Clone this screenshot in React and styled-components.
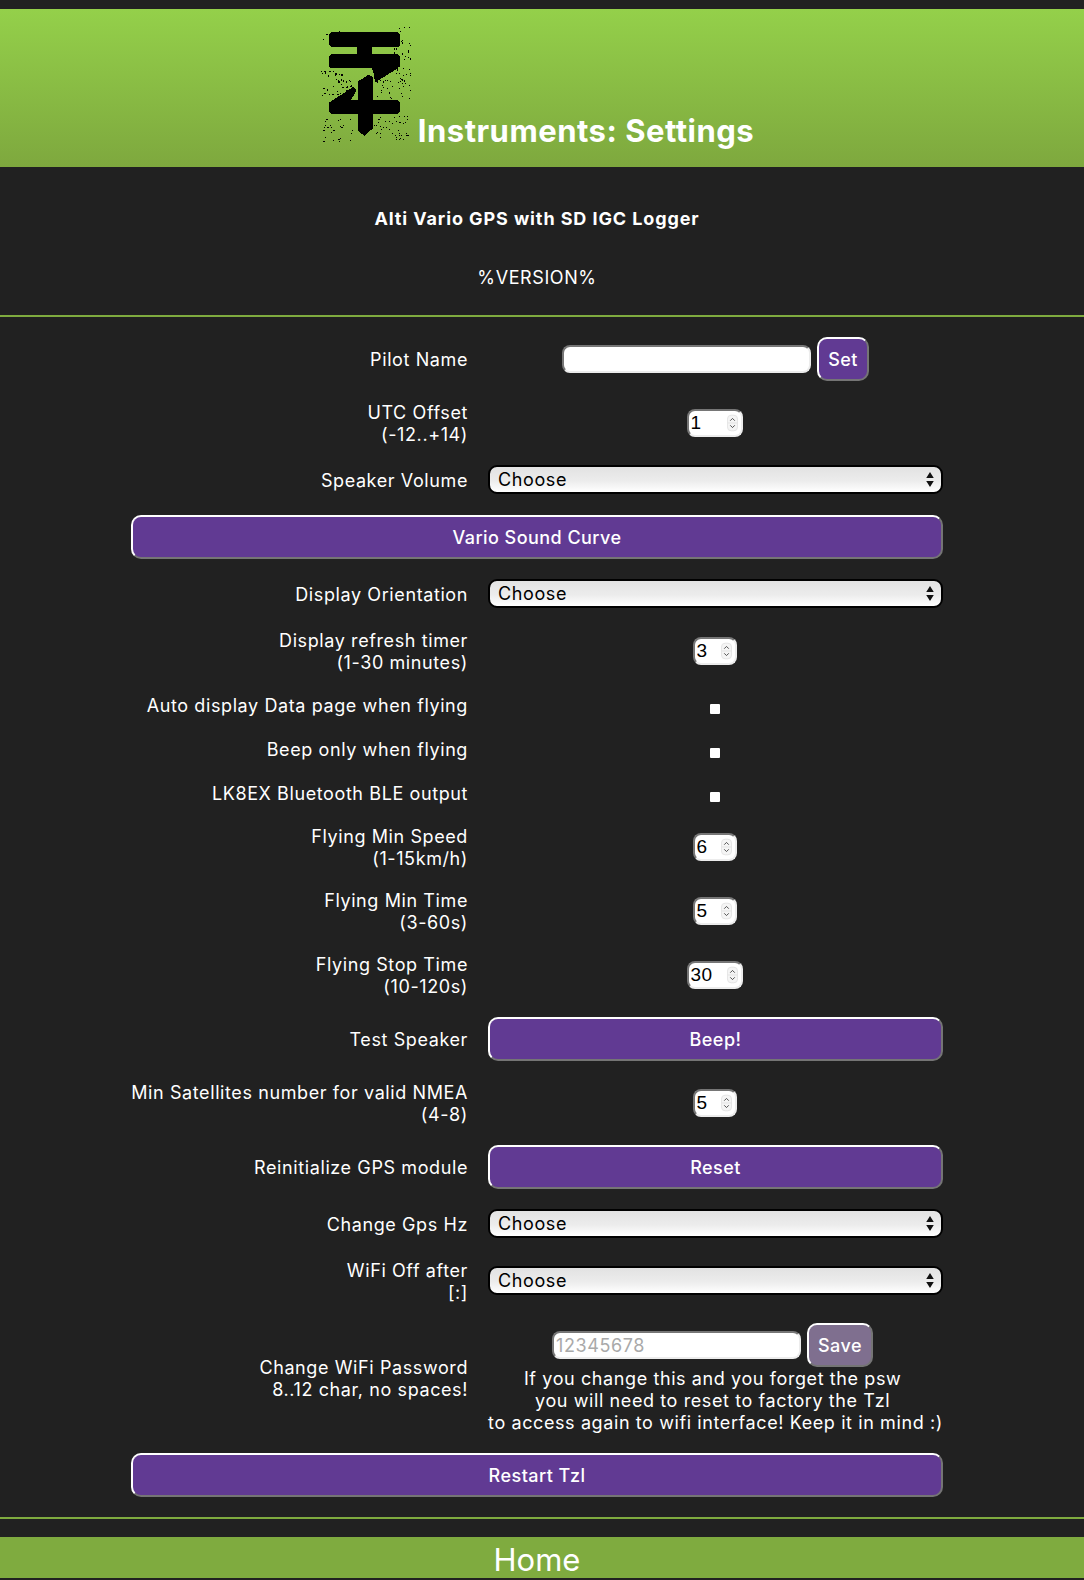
import React from "react"
import styled, { createGlobalStyle } from "styled-components"

const GlobalStyle = createGlobalStyle`
  html, body {
    margin: 0;
    padding: 0;
    background: #212121;
  }
  body {
    font-family: Inter, "Noto Sans", "Liberation Sans", sans-serif;
    letter-spacing: 0.6px;
    color: #fff;
  }
`

// logo speckle, seeded so it comes out the same on every load
const speckle = (seed, count, x0, y0, x1, y1) => {
  let s = seed
  const next = () => {
    s = (s * 16807) % 2147483647
    return s / 2147483647
  }
  return Array.from({ length: count }, () => ({
    x: Math.round(x0 + next() * (x1 - x0)),
    y: Math.round(y0 + next() * (y1 - y0)),
  }))
}

const dots = [
  ...speckle(11, 34, 250, 22, 300, 200),
  ...speckle(23, 42, 32, 155, 128, 240),
  ...speckle(37, 30, 200, 175, 300, 240),
  ...speckle(41, 44, 190, 290, 295, 362),
  ...speckle(53, 26, 40, 296, 135, 368),
  ...speckle(67, 8, 38, 25, 110, 70),
]

const Logo = () => (
  <LogoSvg viewBox="30 20 275 350" aria-label="logo">
    <path d="M62 42H264L270 48V80L264 85H185V108H262L268 114V144L255 154L195 192L190 165L185 150H62L57 144V114L62 108H140V85H62L57 80V48Z" />
    <path d="M145 188L176 168L187 175V245H262L268 251V279L262 285H187V330L162 352L143 335V285H62L57 279V252L130 205L140 214L122 245H143Z" />
    {dots.map((d, i) => (
      <rect key={i} x={d.x} y={d.y} width="3.4" height="3.4" />
    ))}
  </LogoSvg>
)

const Stepper = () => (
  <StepperSvg viewBox="0 0 12 18">
    <rect x="0.5" y="0.5" width="11" height="17" rx="4" fill="#f5f5f5" stroke="#e2e2e2" />
    <line x1="1" y1="9" x2="11" y2="9" stroke="#e2e2e2" />
    <path d="M3.5 6.5L6 4L8.5 6.5M3.5 11.5L6 14L8.5 11.5" fill="none" stroke="#444" strokeWidth="1" />
  </StepperSvg>
)

const NumberField = ({ value, wide }) => (
  <NumberBox $wide={wide}>
    <NumberInput defaultValue={value} />
    <Stepper />
  </NumberBox>
)

const SelectField = () => (
  <SelectWrap>
    <Select>
      <option>Choose</option>
    </Select>
    <SelectArrows viewBox="0 0 10 18">
      <path d="M5 1L9 7.5H1ZM5 17L1 10.5H9Z" />
    </SelectArrows>
  </SelectWrap>
)

const App = () => {
  return (
    <>
      <GlobalStyle />
      <Page>
        <Header>
          <Logo />
          <Title>Instruments: Settings</Title>
        </Header>
        <Subtitle>Alti Vario GPS with SD IGC Logger</Subtitle>
        <Version>%VERSION%</Version>
        <Rule />
        <Form>
          <Label>Pilot Name</Label>
          <Field>
            <TextInput />
            <SmallButton>Set</SmallButton>
          </Field>

          <Label>UTC Offset<br />(-12..+14)</Label>
          <Field><NumberField value="1" wide /></Field>

          <Label>Speaker Volume</Label>
          <SelectField />

          <WideButton $span>Vario Sound Curve</WideButton>

          <Label>Display Orientation</Label>
          <SelectField />

          <Label>Display refresh timer<br />(1-30 minutes)</Label>
          <Field><NumberField value="3" /></Field>

          <Label>Auto display Data page when flying</Label>
          <Field><CheckMark /></Field>

          <Label>Beep only when flying</Label>
          <Field><CheckMark /></Field>

          <Label>LK8EX Bluetooth BLE output</Label>
          <Field><CheckMark /></Field>

          <Label>Flying Min Speed<br />(1-15km/h)</Label>
          <Field><NumberField value="6" /></Field>

          <Label>Flying Min Time<br />(3-60s)</Label>
          <Field><NumberField value="5" /></Field>

          <Label>Flying Stop Time<br />(10-120s)</Label>
          <Field><NumberField value="30" wide /></Field>

          <Label>Test Speaker</Label>
          <WideButton>Beep!</WideButton>

          <Label>Min Satellites number for valid NMEA<br />(4-8)</Label>
          <Field><NumberField value="5" /></Field>

          <Label>Reinitialize GPS module</Label>
          <WideButton>Reset</WideButton>

          <Label>Change Gps Hz</Label>
          <SelectField />

          <Label>WiFi Off after<br />[:]</Label>
          <SelectField />

          <Label>Change WiFi Password<br />8..12 char, no spaces!</Label>
          <PasswordCell>
            <PasswordRow>
              <TextInput placeholder="12345678" />
              <SmallButton $muted>Save</SmallButton>
            </PasswordRow>
            <Note>
              If you change this and you forget the psw&nbsp;<br />
              you will need to reset to factory the Tzl&nbsp;<br />
              to access again to wifi interface! Keep it in mind :)
            </Note>
          </PasswordCell>

          <WideButton $span>Restart Tzl</WideButton>
        </Form>
        <Rule $bottom />
        <HomeBar>Home</HomeBar>
      </Page>
    </>
  )
}

const Page = styled.div`
  padding: 9px 0 1px;
  width: 1084px;
  box-sizing: border-box;
`

const Header = styled.header`
  height: 158px;
  box-sizing: border-box;
  background: linear-gradient(#94d04a, #7ea83e);
  display: flex;
  justify-content: center;
  align-items: flex-end;
  gap: 6px;
  padding: 0 10px 17px 0;
`

const LogoSvg = styled.svg`
  width: 92px;
  height: 117px;
  margin-bottom: 8px;
  fill: #000;
  shape-rendering: crispEdges;
`

const Title = styled.h1`
  margin: 0;
  font-size: 31px;
  line-height: 38px;
  font-weight: 700;
  letter-spacing: 0.5px;
  color: #fff;
`

const Subtitle = styled.h3`
  margin: 41px 0 0;
  padding-right: 10px;
  text-align: center;
  font-size: 18px;
  line-height: 22px;
  font-weight: 700;
  letter-spacing: 0.9px;
`

const Version = styled.p`
  margin: 37px 0 0;
  padding-right: 10px;
  text-align: center;
  font-size: 18px;
  line-height: 22px;
`

const Rule = styled.hr`
  margin: ${p => (p.$bottom ? "20px 0 18px" : "26px 0 20px")};
  border: 0;
  height: 2px;
  background: #7fab3f;
`

const Form = styled.div`
  width: 812px;
  margin-left: 131px;
  display: grid;
  grid-template-columns: 337px 455px;
  column-gap: 20px;
  row-gap: 20px;
  align-items: center;
`

const Label = styled.div`
  text-align: right;
  font-size: 18px;
  line-height: 22px;
  min-height: 22px;
  white-space: nowrap;
  padding-top: 1px;
  margin-bottom: -1px;
`

const Field = styled.div`
  display: flex;
  justify-content: center;
  align-items: center;
  gap: 6px;
  min-height: 24px;
`

const PasswordCell = styled.div`
  display: flex;
  flex-direction: column;
`

const PasswordRow = styled(Field)`
  padding-right: 6px;
`

const Note = styled.div`
  margin: 1px 0 -1px;
  text-align: center;
  font-size: 18px;
  line-height: 22px;
  white-space: nowrap;
`

const TextInput = styled.input`
  width: 249px;
  height: 28px;
  box-sizing: border-box;
  padding: 0 2px;
  background: #fff;
  border: 2px solid;
  border-color: #767676 #ececec #ececec #767676;
  border-radius: 8px;
  font-family: inherit;
  font-size: 18px;
  letter-spacing: inherit;
  color: #000;
  outline: none;

  &::placeholder {
    color: #a9a9a9;
  }
`

const buttonBase = `
  box-sizing: border-box;
  height: 44px;
  color: #fff;
  font-family: inherit;
  font-size: 18px;
  font-weight: 500;
  letter-spacing: 0.45px;
  border: 2px solid;
  border-color: #fff #757575 #757575 #fff;
`

const SmallButton = styled.button`
  ${buttonBase}
  width: ${p => (p.$muted ? "66px" : "52px")};
  padding: 0;
  border-radius: 10px;
  background: ${p => (p.$muted ? "#7f6f8f" : "#613a93")};
`

const WideButton = styled.button`
  ${buttonBase}
  width: 100%;
  border-radius: 10px;
  background: #613a93;
  ${p => p.$span && "grid-column: 1 / -1;"}
`

const NumberBox = styled.div`
  display: flex;
  align-items: center;
  width: ${p => (p.$wide ? "56px" : "44px")};
  height: 28px;
  box-sizing: border-box;
  padding: 0 3px 0 2px;
  margin-right: 2px;
  background: #fff;
  border: 2px solid;
  border-color: #767676 #ececec #ececec #767676;
  border-radius: 8px;
`

const NumberInput = styled.input`
  flex: 1;
  min-width: 0;
  padding: 0;
  border: 0;
  background: transparent;
  font-family: "Liberation Sans", Arial, sans-serif;
  font-size: 19px;
  letter-spacing: 0.5px;
  color: #000;
  outline: none;
`

const StepperSvg = styled.svg`
  flex: none;
  width: 11px;
  height: 18px;
`

const CheckMark = styled.span`
  display: block;
  width: 10px;
  height: 10px;
  margin: 8px 2px 0 0;
  border-radius: 1px;
  background: #fff;
`

const SelectWrap = styled.div`
  position: relative;
  height: 29px;
  margin-bottom: 1px;
`

const Select = styled.select`
  appearance: none;
  display: block;
  width: 100%;
  height: 29px;
  box-sizing: border-box;
  padding: 0 24px 0 8px;
  border: 2px solid #000;
  border-radius: 9px;
  background: linear-gradient(#e2e2e2, #ececec 55%, #fff);
  font-family: inherit;
  font-size: 18px;
  letter-spacing: inherit;
  color: #000;
  outline: none;
`

const SelectArrows = styled.svg`
  position: absolute;
  top: 6px;
  right: 8px;
  width: 10px;
  height: 17px;
  fill: #111;
  pointer-events: none;
`

const HomeBar = styled.a`
  display: block;
  height: 41px;
  box-sizing: border-box;
  background: #7fab3f;
  color: #fff;
  text-align: center;
  padding: 2px 10px 0 0;
  font-size: 31px;
  letter-spacing: 0;
  line-height: 42px;
`

export default App
